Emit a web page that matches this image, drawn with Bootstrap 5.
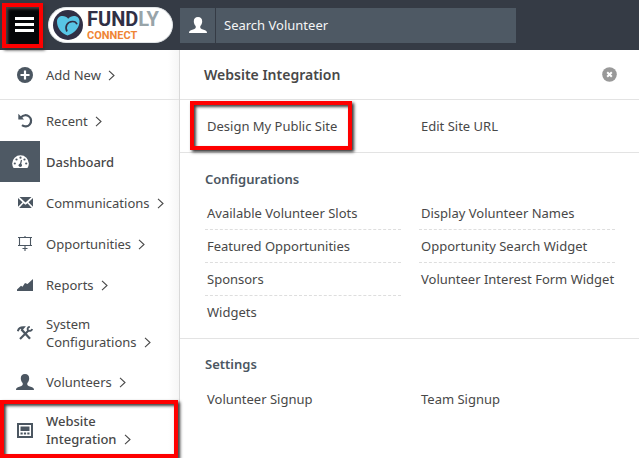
<!DOCTYPE html>
<html lang="en">
<head>
<meta charset="utf-8">
<meta name="viewport" content="width=device-width, initial-scale=1">
<title>Website Integration - Fundly Connect</title>
<link href="https://cdn.jsdelivr.net/npm/bootstrap@5.3.0/dist/css/bootstrap.min.css" rel="stylesheet">
<style>
body{font-family:"Noto Sans","Open Sans",sans-serif;font-size:13px;line-height:18px;color:#484848;background:#fff}
a{color:inherit;text-decoration:none}
svg{display:block;flex:none}
.topbar{background:#353b45;height:50px}
.menu-toggle{width:33px;height:37px;background:#050608;border:0;padding:0 0 0 4px;margin-left:6px;color:#fff}
.brand{width:125px;height:36px;margin:0 7px 0 9px;border-radius:18px;background:#fff;border:1px solid #dfe3e6}
.brand-words{font-family:Roboto,sans-serif;font-weight:700;margin-left:4px}
.word-top{font-size:20px;line-height:22px;color:#302f45}
.word-top span{color:#98a4a9}
.word-bottom{font-size:11px;line-height:12px;color:#ef8535}
.search{width:336px;height:35px;gap:1px}
.search-icon{width:35px;background:#4e5964;color:#fff}
.search input{background:#4e5964;border:0;border-radius:0;color:#fff;font-size:13px;padding:0 8px;min-width:0;flex:1;outline:0}
.search input::placeholder{color:#f4f5f6;opacity:1}
.side{width:180px;border-right:1px solid #d9d9d9;background:linear-gradient(to right,#fff 168px,#f6f6f6)}
.side-item{height:41px}
.side-item.first{height:50px;border-bottom:1px solid #e3e3e3}
.side-item.two-line{height:56px}
.side-icon{width:40px;align-self:stretch;padding-left:10px;color:#4b5661;margin-right:6px}
.side-item.current .side-icon{background:#4e5964;color:#fff;padding-left:0}
.current,.chosen{font-weight:500}
.chev{display:inline-block;vertical-align:-1px;margin-left:7px}
.marked{position:relative}
.marked::after{content:"";position:absolute;inset:0;border:4px solid #fe0000;box-shadow:2px 2px 3px #333,inset 2px 2px 3px #444;pointer-events:none;z-index:2}
.menu-toggle.marked::after{inset:-4px}
.chosen.marked::after{inset:-2px 1px 0 0}
.pick.marked::after{inset:-16px 49px -15px -15px}
.panel-head{height:50px;padding:0 22px 0 24px;border-bottom:1px solid #e3e3e3}
.panel-head h1{font-size:14px;line-height:20px;font-weight:600;margin:0}
.block{padding:0 24px 0 25px;border-bottom:1px solid #e3e3e3}
.block.links{padding-top:17px;padding-bottom:17px}
.block h2{font-size:13px;line-height:18px;font-weight:600;color:#4b5661;margin:0}
.block.config{padding-top:17px;padding-bottom:9px}
.block.settings{padding-top:16px;border:0}
.cols{display:grid;grid-template-columns:1fr 1fr;column-gap:18px}
.cols ul{margin:0;padding:0;list-style:none}
.config .cols{margin-top:9px}
.settings .cols{margin-top:17px}
.cols a{padding-left:2px;display:block;white-space:nowrap}
.config li{height:33px;padding-top:7px}
.config li:not(:last-child){border-bottom:1px dashed #dedede}
.close-btn{border:0;background:none;padding:0}
</style>
<script src="https://cdn.jsdelivr.net/npm/bootstrap@5.3.0/dist/js/bootstrap.bundle.min.js"></script>
</head>
<body>
<svg width="0" height="0" class="position-absolute" aria-hidden="true"><defs>
<symbol id="person" viewBox="0 0 18 16"><path fill="currentColor" d="M9 0c2.800 0 4.200 1.800 4.200 4.300 0 2.200-.8 3.800-1.900 4.800v1.500c0 .7.500 1 1.200 1.300l3.600 1.300c1.200.5 1.900 1 1.900 2.800H0c0-1.800.7-2.300 1.900-2.800l3.600-1.300c.7-.3 1.200-.6 1.200-1.300V9.100C5.600 8.100 4.800 6.500 4.800 4.300 4.800 1.800 6.200 0 9 0z"/></symbol>
<symbol id="chev" viewBox="0 0 7 11"><path d="M1 .8l5 4.700-5 4.700" fill="none" stroke="currentColor" stroke-width="1.100"/></symbol>
</defs></svg>

<header class="topbar d-flex align-items-center">
  <button class="menu-toggle marked d-flex align-items-center justify-content-center" aria-label="Menu">
    <svg width="20" height="16" viewBox="0 0 20 16"><path d="M0 0h19v3H0zM0 6h19v3H0zM0 12h19v3H0z" fill="#fff"/></svg>
  </button>
  <a href="#" class="brand d-flex align-items-center flex-shrink-0">
    <svg class="ms-1" width="30" height="32" viewBox="0 0 30 32"><circle cx="15" cy="16" r="15" fill="#302f45"/><path d="M14.500 26.500C8 24.500 4 18.500 4 12.500 4 9 6.500 7 9.500 7c2.500 0 4.300.9 5.700 2.700C16.800 7.800 18.800 7 21 7c3.300 0 5.500 2.200 5.500 5.500C26.500 18.500 21.500 24.500 14.500 26.500z" fill="#58c5e5"/><path d="M14 22.500c-2.500-5 .3-9.800 5.500-10 2-.1 3.800 1 4.500 2.800" fill="none" stroke="#302f45" stroke-width="1.700"/></svg>
    <span class="brand-words d-flex flex-column"><span class="word-top">FUND<span>LY</span></span><span class="word-bottom">CONNECT</span></span>
  </a>
  <div class="search d-flex">
    <span class="search-icon d-flex align-items-center justify-content-center"><svg width="18" height="16"><use href="#person"/></svg></span>
    <input type="text" placeholder="Search Volunteer" aria-label="Search Volunteer">
  </div>
</header>

<div class="d-flex align-items-stretch">
  <nav class="side flex-shrink-0" aria-label="Main">
    <a href="#" class="side-item first d-flex align-items-center">
      <span class="side-icon d-flex align-items-center justify-content-center"><svg width="16" height="16" viewBox="0 0 16 16"><circle cx="8" cy="8" r="8" fill="currentColor"/><path d="M8 3.500v9M3.500 8h9" stroke="#fff" stroke-width="2.200"/></svg></span>
      <span>Add New<svg class="chev" width="7" height="11"><use href="#chev"/></svg></span>
    </a>
    <a href="#" class="side-item d-flex align-items-center">
      <span class="side-icon d-flex align-items-center justify-content-center"><svg width="15" height="15" viewBox="0 0 15 15"><path d="M3.200 4.200A5.600 5.600 0 1 1 4 12.200" fill="none" stroke="currentColor" stroke-width="2.200"/><path d="M.3.800v5.800h5.800z" fill="currentColor"/></svg></span>
      <span>Recent<svg class="chev" width="7" height="11"><use href="#chev"/></svg></span>
    </a>
    <a href="#" class="side-item current d-flex align-items-center">
      <span class="side-icon d-flex align-items-center justify-content-center"><svg width="17" height="13" viewBox="0 0 17 13"><path d="M1.600 13A8.300 8.300 0 0 1 .2 8.500a8.300 8.300 0 0 1 16.600 0c0 1.700-.5 3.200-1.400 4.500z" fill="#fff"/><g fill="#4e5964"><circle cx="2.800" cy="8.500" r="1.100"/><circle cx="4.500" cy="4.500" r="1.100"/><circle cx="8.500" cy="2.700" r="1.100"/><circle cx="12.500" cy="4.500" r="1.100"/><circle cx="14.200" cy="8.500" r="1.100"/><circle cx="8.300" cy="10.300" r="1.700"/></g><path d="M8.300 10l1.200-5" stroke="#4e5964" stroke-width="1.200"/></svg></span>
      <span>Dashboard</span>
    </a>
    <a href="#" class="side-item d-flex align-items-center">
      <span class="side-icon d-flex align-items-center justify-content-center"><svg width="15" height="11" viewBox="0 0 15 11"><path d="M1.500 0h12L7.500 5.400zM0 1l4.500 4.200L0 9.800zM15 1l-4.500 4.200L15 9.800zM1.200 11l4.300-4.800 2 1.600 2-1.600 4.300 4.800z" fill="currentColor"/></svg></span>
      <span>Communications<svg class="chev" width="7" height="11"><use href="#chev"/></svg></span>
    </a>
    <a href="#" class="side-item d-flex align-items-center">
      <span class="side-icon d-flex align-items-center justify-content-center"><svg width="14" height="15" viewBox="0 0 14 15"><path d="M0 1.500h14M0 9.500h14M1.500 1.500v8M12.500 1.500v8M7 0v1M7 10v5M4.500 12.500h5" fill="none" stroke="currentColor" stroke-width="1.100"/></svg></span>
      <span>Opportunities<svg class="chev" width="7" height="11"><use href="#chev"/></svg></span>
    </a>
    <a href="#" class="side-item d-flex align-items-center">
      <span class="side-icon d-flex align-items-center justify-content-center"><svg width="16" height="12" viewBox="0 0 16 12"><path d="M0 12v-1.500l4-3.800 1.500 1L8 4l2.500 1L16 0v12z" fill="currentColor"/></svg></span>
      <span>Reports<svg class="chev" width="7" height="11"><use href="#chev"/></svg></span>
    </a>
    <a href="#" class="side-item two-line d-flex align-items-center">
      <span class="side-icon d-flex align-items-center justify-content-center"><svg width="16" height="14" viewBox="0 0 16 14"><g fill="none" stroke="currentColor"><path d="M4.500 3.500l8.500 9.300" stroke-width="2.300"/><path d="M3 13l8.500-8.500" stroke-width="2.200"/><path d="M.8 5.200C1.500 2.500 3.500 1 6.800 1.200L4.500 3.800" stroke-width="2"/><path d="M12.800.8c-2 .3-2.700 2-1.800 3.400 1.400 1.200 3.500.8 4.200-1.200" stroke-width="1.800"/></g></svg></span>
      <span>System<br>Configurations<svg class="chev" width="7" height="11"><use href="#chev"/></svg></span>
    </a>
    <a href="#" class="side-item d-flex align-items-center">
      <span class="side-icon d-flex align-items-center justify-content-center"><svg width="18" height="16"><use href="#person"/></svg></span>
      <span>Volunteers<svg class="chev" width="7" height="11"><use href="#chev"/></svg></span>
    </a>
    <a href="#" class="side-item two-line chosen marked d-flex align-items-center" aria-current="page">
      <span class="side-icon d-flex align-items-center justify-content-center"><svg width="16" height="15" viewBox="0 0 16 15"><path d="M1 1h14v13H1z" fill="none" stroke="currentColor" stroke-width="2"/><path d="M3.500 3.500h9v4.500h-9zM3.500 9.500h2.200v2H3.500zM6.900 9.500h2.200v2H6.900zM10.300 9.500h2.200v2h-2.200z" fill="currentColor"/></svg></span>
      <span>Website<br>Integration<svg class="chev" width="7" height="11"><use href="#chev"/></svg></span>
    </a>
  </nav>

  <main class="flex-grow-1">
    <div class="panel-head d-flex align-items-center justify-content-between">
      <h1>Website Integration</h1>
      <button class="close-btn" aria-label="Close"><svg width="15" height="15" viewBox="0 0 15 15"><circle cx="7.500" cy="7.500" r="7.300" fill="#999"/><path d="M5.200 5.200l4.600 4.600M9.800 5.200L5.200 9.800" stroke="#fff" stroke-width="2"/></svg></button>
    </div>
    <section class="block links"><div class="cols">
      <div class="pick marked"><a href="#">Design My Public Site</a></div>
      <div><a href="#">Edit Site URL</a></div>
    </div></section>
    <section class="block config">
      <h2>Configurations</h2>
      <div class="cols">
        <ul><li><a href="#">Available Volunteer Slots</a></li><li><a href="#">Featured Opportunities</a></li><li><a href="#">Sponsors</a></li><li><a href="#">Widgets</a></li></ul>
        <ul><li><a href="#">Display Volunteer Names</a></li><li><a href="#">Opportunity Search Widget</a></li><li><a href="#">Volunteer Interest Form Widget</a></li></ul>
      </div>
    </section>
    <section class="block settings">
      <h2>Settings</h2>
      <div class="cols"><div><a href="#">Volunteer Signup</a></div><div><a href="#">Team Signup</a></div></div>
    </section>
  </main>
</div>
</body>
</html>
